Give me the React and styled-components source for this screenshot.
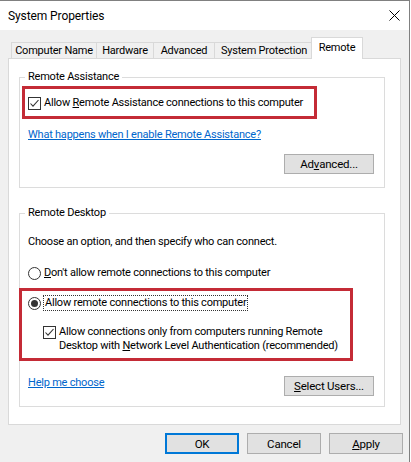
import React from "react";
import styled, { createGlobalStyle } from "styled-components";

const FONT = `Roboto, "Noto Sans", "Liberation Sans", sans-serif`;

const GlobalStyle = createGlobalStyle`
  html, body { margin: 0; padding: 0; background: #fff; }
  body { font-family: ${FONT}; font-size: 11px; letter-spacing: -0.22px; color: #000; }
  * { box-sizing: border-box; }
`;

const Window = styled.div`
  width: 410px;
  height: 462px;
  border-top: 1px solid #808080;
  border-right: 1px solid #808080;
  background: #f0f0f0;
  display: flex;
  flex-direction: column;
  overflow: hidden;
`;

const TitleBar = styled.div`
  height: 29px;
  flex: none;
  background: #fff;
  display: flex;
  align-items: center;
  justify-content: space-between;
  padding: 0 9px 0 8px;
`;

const Title = styled.span`
  font-size: 12px;
  letter-spacing: -0.1px;
  line-height: 14px;
`;

const CloseIcon = styled.svg`
  width: 11px;
  height: 11px;
  display: block;
`;

const Body = styled.div`
  display: flex;
  flex-direction: column;
  padding: 7px 8px 0 8px;
`;

const TabStrip = styled.div`
  display: flex;
  align-items: flex-end;
  height: 22px;
  padding-left: 3px;
  margin-bottom: -1px;
  position: relative;
  z-index: 1;
`;

const Tab = styled.div`
  width: ${(p) => p.$w}px;
  height: ${(p) => (p.$active ? 22 : 16)}px;
  margin-bottom: ${(p) => (p.$active ? 0 : 1)}px;
  margin-left: ${(p) => (p.$first ? 0 : p.$active ? -3 : -1)}px;
  border: 1px solid #d9d9d9;
  border-bottom: none;
  background: ${(p) => (p.$active ? "#fff" : "#f0f0f0")};
  display: flex;
  align-items: center;
  justify-content: center;
  line-height: 14px;
  white-space: nowrap;
  position: relative;
  z-index: ${(p) => (p.$active ? 1 : 0)};
  padding-bottom: ${(p) => (p.$active ? 2 : 0)}px;
`;

const Panel = styled.div`
  background: #fff;
  border: 1px solid #d9d9d9;
  padding: 18px 15px 17px 10px;
  display: flex;
  flex-direction: column;
`;

const Group = styled.section`
  position: relative;
  border: 1px solid #dcdcdc;
  display: flex;
  flex-direction: column;
  margin-top: ${(p) => p.$mt || 0}px;
  padding-bottom: ${(p) => p.$pb}px;
`;

const Legend = styled.span`
  position: absolute;
  top: -8px;
  left: 5px;
  padding: 0 3px;
  background: #fff;
  line-height: 14px;
  white-space: nowrap;
`;

const Highlight = styled.div`
  border: 3px solid #c42b36;
  display: flex;
  flex-direction: column;
  width: ${(p) => p.$w}px;
  margin-top: ${(p) => p.$mt}px;
  margin-left: ${(p) => p.$ml}px;
  padding: ${(p) => p.$pad};
`;

const Option = styled.div`
  display: flex;
  align-items: ${(p) => (p.$top ? "flex-start" : "center")};
  gap: 3px;
  line-height: 14px;
  min-height: 14px;
  margin-top: ${(p) => p.$mt || 0}px;
  margin-left: ${(p) => p.$ml || 0}px;
  white-space: nowrap;
`;

const CheckBox = styled.span`
  width: 13px;
  height: 13px;
  flex: none;
  border: 1px solid #333;
  background: #fff;
  display: flex;
  align-items: center;
  justify-content: center;
  margin-top: ${(p) => (p.$top ? 1 : 0)}px;
`;

const RadioDot = styled.span`
  width: 13px;
  height: 13px;
  flex: none;
  border-radius: 50%;
  border: 1px solid #333;
  background: #fff;
  display: flex;
  align-items: center;
  justify-content: center;
  &::after {
    content: "";
    width: 7px;
    height: 7px;
    border-radius: 50%;
    background: #333;
    display: ${(p) => (p.$on ? "block" : "none")};
  }
`;

const FocusText = styled.span`
  outline: 1px dotted #333;
  outline-offset: 0;
  padding: 0 1px;
`;

const Key = styled.span`
  text-decoration: underline;
`;

const Text = styled.div`
  line-height: 14px;
  margin-top: ${(p) => p.$mt || 0}px;
  margin-left: ${(p) => p.$ml || 0}px;
  white-space: nowrap;
`;

const Link = styled.a`
  color: #0066cc;
  text-decoration: underline;
  line-height: 14px;
  cursor: pointer;
  align-self: flex-start;
  margin-top: ${(p) => p.$mt || 0}px;
  margin-left: ${(p) => p.$ml || 0}px;
  white-space: nowrap;
`;

const Button = styled.button`
  width: ${(p) => p.$w}px;
  height: ${(p) => p.$h || 20}px;
  flex: none;
  background: #e1e1e1;
  border: 1px solid ${(p) => (p.$default ? "#0078d7" : "#adadad")};
  box-shadow: ${(p) => (p.$default ? "inset 0 0 0 1px #0078d7" : "none")};
  font-family: ${FONT};
  font-size: 11.5px;
  letter-spacing: -0.2px;
  color: #000;
  padding: 0;
  display: flex;
  align-items: center;
  justify-content: center;
  align-self: ${(p) => p.$align || "auto"};
  margin-top: ${(p) => p.$mt || 0}px;
  margin-right: ${(p) => p.$mr || 0}px;
`;

const ActionRow = styled.div`
  display: flex;
  align-items: center;
  justify-content: space-between;
  margin-top: ${(p) => p.$mt}px;
  padding: 0 10px 0 8px;
`;

const DialogButtons = styled.div`
  display: flex;
  justify-content: flex-end;
  gap: 8px;
  margin-top: 8px;
  margin-right: -2px;
`;

const Check = ({ top }) => (
  <CheckBox $top={top}>
    <svg width="11" height="11" viewBox="0 0 11 11">
      <polyline
        points="1.5,5.5 4,8.2 9.5,2"
        fill="none"
        stroke="#333"
        strokeWidth="1.1"
      />
    </svg>
  </CheckBox>
);

const tabs = [
  { label: "Computer Name", w: 86 },
  { label: "Hardware", w: 58 },
  { label: "Advanced", w: 62 },
  { label: "System Protection", w: 100 },
  { label: "Remote", w: 52, active: true },
];

export default function App() {
  return (
    <>
      <GlobalStyle />
      <Window>
        <TitleBar>
          <Title>System Properties</Title>
          <CloseIcon viewBox="0 0 11 11">
            <path d="M0.5 0.5 L10.5 10.5 M10.5 0.5 L0.5 10.5" stroke="#000" strokeWidth="1" />
          </CloseIcon>
        </TitleBar>
        <Body>
          <TabStrip>
            {tabs.map((t, i) => (
              <Tab key={t.label} $w={t.w} $active={t.active} $first={i === 0}>
                {t.label}
              </Tab>
            ))}
          </TabStrip>
          <Panel>
            <Group $pb={13}>
              <Legend>Remote Assistance</Legend>
              <Highlight $w={295} $mt={8} $ml={2} $pad="7px 0 6px 3px">
                <Option>
                  <Check />
                  <span>
                    Allow <Key>R</Key>emote Assistance connections to this computer
                  </span>
                </Option>
              </Highlight>
              <Link $mt={9} $ml={8}>What happens when I enable Remote Assistance?</Link>
              <Button $w={90} $mt={12} $mr={10} $align="flex-end">
                Ad<Key>v</Key>anced...
              </Button>
            </Group>

            <Group $mt={25} $pb={10}>
              <Legend>Remote Desktop</Legend>
              <Text $mt={21} $ml={8}>Choose an option, and then specify who can connect.</Text>
              <Option $mt={17} $ml={8}>
                <RadioDot />
                <span>
                  <Key>D</Key>on't allow remote connections to this computer
                </span>
              </Option>
              <Highlight $w={334} $mt={8} $ml={-1} $pad="5px 0 5px 6px">
                <Option>
                  <RadioDot $on />
                  <FocusText>Allow remote connections to this computer</FocusText>
                </Option>
                <Option $top $mt={15} $ml={15}>
                  <Check top />
                  <span>
                    Allow connections only from computers running Remote
                    <br />
                    Desktop with <Key>N</Key>etwork Level Authentication (recommended)
                  </span>
                </Option>
              </Highlight>
              <ActionRow $mt={15}>
                <Link>Help me choose</Link>
                <Button $w={90}>
                  <Key>S</Key>elect Users...
                </Button>
              </ActionRow>
            </Group>
          </Panel>
          <DialogButtons>
            <Button $w={74} $h={21} $default>OK</Button>
            <Button $w={74} $h={21}>Cancel</Button>
            <Button $w={74} $h={21}>
              <Key>A</Key>pply
            </Button>
          </DialogButtons>
        </Body>
      </Window>
    </>
  );
}
